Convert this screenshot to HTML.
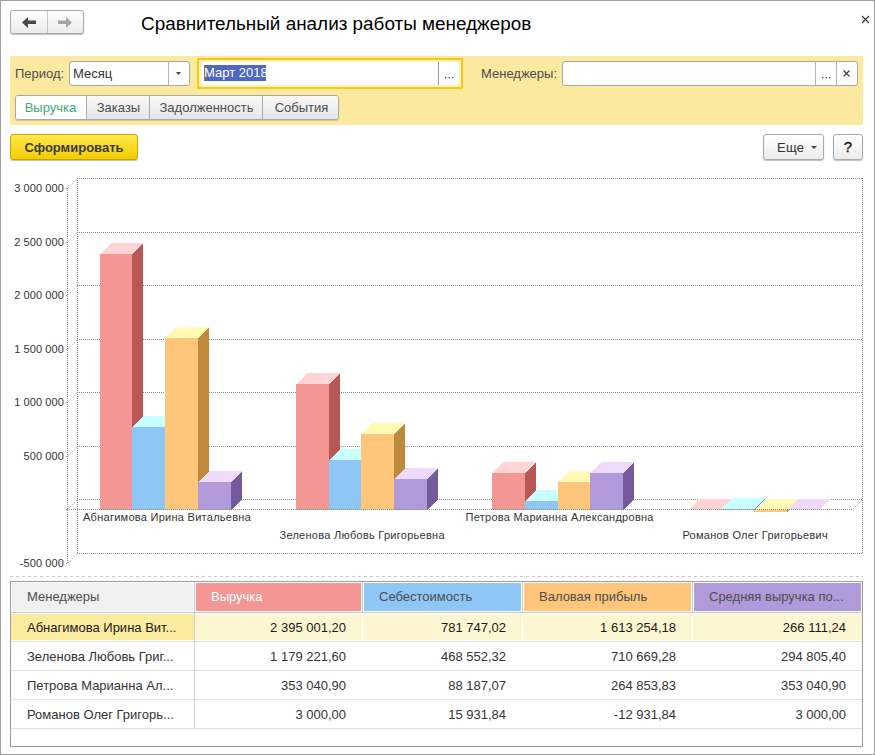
<!DOCTYPE html>
<html><head><meta charset="utf-8"><style>
*{margin:0;padding:0;box-sizing:border-box}
html,body{width:875px;height:755px;overflow:hidden;background:#fff;font-family:"Liberation Sans", sans-serif;}
#win{position:absolute;left:0;top:0;width:875px;height:755px;border:1px solid #a0a0a0;}
.abs{position:absolute}
.navgrp{position:absolute;left:10px;top:10px;width:74px;height:24px;border:1px solid #a8a8a8;border-radius:3px;background:linear-gradient(#ffffff,#ececec);box-shadow:0 1px 1px rgba(0,0,0,.25);}
.navsep{position:absolute;left:36px;top:0;width:1px;height:22px;background:#c8c8c8}
.title{position:absolute;left:141px;top:13px;font-size:18.9px;color:#000;white-space:nowrap}
.close{position:absolute;left:860px;top:14px}
.panel{position:absolute;left:10px;top:56px;width:853px;height:69px;background:#fbe9a0}
.lbl{position:absolute;font-size:13px;color:#4d4d4d;white-space:nowrap}
.inp{position:absolute;background:#fff;border:1px solid #a9a9a9;border-radius:3px}
.tabs{position:absolute;left:15px;top:95px;width:324px;height:25px;border:1px solid #a9a9a9;border-radius:3px;overflow:hidden;box-shadow:0 1px 1px rgba(0,0,0,.15)}
.tab{position:absolute;top:0;height:23px;font-size:13px;color:#4d4d4d;background:linear-gradient(#f8f8f8,#e6e6e6);border-left:1px solid #a9a9a9;line-height:24px;text-align:center}
.btn{position:absolute;border:1px solid #a8a8a8;border-radius:3px;background:linear-gradient(#ffffff,#ececec);box-shadow:0 1px 1px rgba(0,0,0,.25);font-size:13px;color:#333}
.chart{position:absolute;left:0;top:0}
.yl{position:absolute;right:811px;letter-spacing:0.1px;font-size:11px;color:#333;white-space:nowrap;line-height:13px}
.cl{position:absolute;font-size:11px;color:#333;white-space:nowrap;line-height:13px;letter-spacing:0.27px}
.dash{position:absolute;left:10px;top:576px;width:853px;height:1px;background:repeating-linear-gradient(90deg,#c8c8c8 0 3px,transparent 3px 6px)}
.tbl{position:absolute;left:10px;top:581px;width:853px;height:166px;border:1px solid #9b9b9b}
.th{position:absolute;top:583px;height:28px;font-size:13px;line-height:28px;padding-left:15px;white-space:nowrap}
.rowbg{position:absolute;height:26px}
.rsep{position:absolute;left:11px;width:851px;height:1px;background:#e0e0e0}
.hsep{position:absolute;left:11px;top:612px;width:851px;height:1px;background:#c8c8c8}
.vsep{position:absolute;top:582px;width:1px;height:147px;background:#cfcfcf}
.td{position:absolute;height:28px;font-size:13px;line-height:28px;white-space:nowrap}
.num{text-align:right}
</style></head><body>
<div id="win"></div>
<div class="navgrp"><div class="navsep"></div>
<svg class="abs" style="left:0;top:0" width="74" height="24" viewBox="0 0 74 24"><path d="M11 11.5 L17 6 L17 9.5 L25 9.5 L25 13 L17 13 L17 17 Z" fill="#4a4a4a"/><path d="M61 11.5 L55 6 L55 9.5 L47 9.5 L47 13 L55 13 L55 17 Z" fill="#a6a6a6"/></svg>
</div>
<div class="title">Сравнительный анализ работы менеджеров</div>
<svg class="close" width="11" height="11" viewBox="0 0 11 11"><path d="M2 2 L9 9 M9 2 L2 9" stroke="#333" stroke-width="1.1"/></svg>
<div class="panel"></div>
<div class="lbl" style="left:15px;top:66px">Период:</div>
<div class="inp" style="left:69px;top:61px;width:121px;height:25px">
  <div class="lbl" style="left:3px;top:4px;color:#333">Месяц</div>
  <div class="abs" style="left:98px;top:0;width:1px;height:23px;background:#b5b5b5"></div>
  <svg class="abs" style="left:106px;top:10px" width="6" height="4"><path d="M0 0 H5 L2.5 3 Z" fill="#444"/></svg>
</div>
<div class="abs" style="left:197px;top:58px;width:266px;height:31px;border:2px solid #f7c818;background:#fdf0b8"></div>
<div class="abs" style="left:201px;top:62px;width:258px;height:23px;background:#fff;border-radius:3px"></div>
<div class="abs" style="left:438px;top:62px;width:1px;height:23px;background:#9a9a9a"></div>
<svg class="abs" style="left:445px;top:77px" width="10" height="3"><rect x="0" y="0" width="1.3" height="1.3" fill="#444"/><rect x="3.5" y="0" width="1.3" height="1.3" fill="#444"/><rect x="7" y="0" width="1.3" height="1.3" fill="#444"/></svg>
<div class="abs" style="left:204px;top:65px;width:62px;height:16px;background:#4e67c3"></div>
<div class="lbl" style="left:204px;top:65px;color:#fff">Март 2018</div>
<div class="abs" style="left:204px;top:65px;width:1px;height:16px;background:#a07820"></div>
<div class="lbl" style="left:481px;top:66px">Менеджеры:</div>
<div class="inp" style="left:562px;top:61px;width:296px;height:25px">
  <div class="abs" style="left:252px;top:0;width:1px;height:23px;background:#b5b5b5"></div>
  <svg class="abs" style="left:259px;top:15px" width="10" height="3"><rect x="0" y="0" width="1.3" height="1.3" fill="#444"/><rect x="3.5" y="0" width="1.3" height="1.3" fill="#444"/><rect x="7" y="0" width="1.3" height="1.3" fill="#444"/></svg>
  <div class="abs" style="left:273px;top:0;width:1px;height:23px;background:#b5b5b5"></div>
  <svg class="abs" style="left:280px;top:8px" width="8" height="8" viewBox="0 0 8 8"><path d="M0.5 0.5 L6.5 6.5 M6.5 0.5 L0.5 6.5" stroke="#3a3a3a" stroke-width="1.1"/></svg>
</div>
<div class="tabs">
  <div class="tab" style="left:-1px;width:71px;background:#fff;color:#3daa78;border-left:none">Выручка</div>
  <div class="tab" style="left:70px;width:64px">Заказы</div>
  <div class="tab" style="left:133px;width:114px">Задолженность</div>
  <div class="tab" style="left:246px;width:78px">События</div>
</div>
<div class="btn" style="left:10px;top:134px;width:128px;height:26px;border-color:#c4a400;background:linear-gradient(#ffe84a,#f2cd00);font-weight:bold;line-height:25px;text-align:center;color:#3a3a3a">Сформировать</div>
<div class="btn" style="left:763px;top:134px;width:61px;height:26px;line-height:25px;padding-left:13px;letter-spacing:0.3px">Еще<svg class="abs" style="left:47px;top:11px" width="6" height="4"><path d="M0 0 H6 L3 3 Z" fill="#444"/></svg></div>
<div class="btn" style="left:833px;top:134px;width:30px;height:26px;line-height:24px;text-align:center;font-size:15px;color:#111;-webkit-text-stroke:0.3px #111">?</div>
<svg class="chart" width="875" height="755" viewBox="0 0 875 755" shape-rendering="crispEdges"><line x1="77" y1="178.5" x2="863" y2="178.5" stroke="#8c8c8c" stroke-dasharray="1 1" /><line x1="67.5" y1="188.5" x2="77.5" y2="178.5" stroke="#c4c4c4" stroke-dasharray="2 1" shape-rendering="auto" /><line x1="77" y1="232.5" x2="863" y2="232.5" stroke="#8c8c8c" stroke-dasharray="1 1" /><line x1="67.5" y1="242.5" x2="77.5" y2="232.5" stroke="#c4c4c4" stroke-dasharray="2 1" shape-rendering="auto" /><line x1="77" y1="285.5" x2="863" y2="285.5" stroke="#8c8c8c" stroke-dasharray="1 1" /><line x1="67.5" y1="295.5" x2="77.5" y2="285.5" stroke="#c4c4c4" stroke-dasharray="2 1" shape-rendering="auto" /><line x1="77" y1="339.5" x2="863" y2="339.5" stroke="#8c8c8c" stroke-dasharray="1 1" /><line x1="67.5" y1="349.5" x2="77.5" y2="339.5" stroke="#c4c4c4" stroke-dasharray="2 1" shape-rendering="auto" /><line x1="77" y1="392.5" x2="863" y2="392.5" stroke="#8c8c8c" stroke-dasharray="1 1" /><line x1="67.5" y1="402.5" x2="77.5" y2="392.5" stroke="#c4c4c4" stroke-dasharray="2 1" shape-rendering="auto" /><line x1="77" y1="446.5" x2="863" y2="446.5" stroke="#8c8c8c" stroke-dasharray="1 1" /><line x1="67.5" y1="456.5" x2="77.5" y2="446.5" stroke="#c4c4c4" stroke-dasharray="2 1" shape-rendering="auto" /><line x1="77" y1="499.5" x2="863" y2="499.5" stroke="#8c8c8c" stroke-dasharray="1 1" /><line x1="67.5" y1="509.5" x2="77.5" y2="499.5" stroke="#c4c4c4" stroke-dasharray="2 1" shape-rendering="auto" /><line x1="77" y1="553.5" x2="863" y2="553.5" stroke="#8c8c8c" stroke-dasharray="1 1" /><line x1="67.5" y1="563.5" x2="77.5" y2="553.5" stroke="#c4c4c4" stroke-dasharray="2 1" shape-rendering="auto" /><line x1="77.5" y1="178" x2="77.5" y2="554" stroke="#8c8c8c" stroke-dasharray="1 1" /><line x1="862.5" y1="178" x2="862.5" y2="554" stroke="#8c8c8c" stroke-dasharray="1 1" /><line x1="67.5" y1="188" x2="67.5" y2="564" stroke="#8c8c8c" stroke-dasharray="1 1" /><line x1="852.5" y1="509.5" x2="862.5" y2="499.5" stroke="#c4c4c4" stroke-dasharray="2 1" shape-rendering="auto" /><rect x="100" y="254" width="32" height="256" fill="#f49694"/><polygon points="100,254 132,254 143,243 111,243" fill="#ffd4d4"/><polygon points="132,254 143,243 143,499 132,510" fill="#b75856"/><rect x="132" y="427" width="33" height="83" fill="#8ec6f6"/><polygon points="132,427 165,427 176,416 143,416" fill="#c8ffff"/><polygon points="165,427 176,416 176,499 165,510" fill="#5a8dbf"/><rect x="165" y="338" width="33" height="172" fill="#fdc67b"/><polygon points="165,338 198,338 209,327 176,327" fill="#fffbb4"/><polygon points="198,338 209,327 209,499 198,510" fill="#bf893d"/><rect x="198" y="482" width="33" height="28" fill="#b19ad9"/><polygon points="198,482 231,482 242,471 209,471" fill="#f0dafc"/><polygon points="231,482 242,471 242,499 231,510" fill="#735a9d"/><rect x="296" y="384" width="33" height="126" fill="#f49694"/><polygon points="296,384 329,384 340,373 307,373" fill="#ffd4d4"/><polygon points="329,384 340,373 340,499 329,510" fill="#b75856"/><rect x="329" y="460" width="32" height="50" fill="#8ec6f6"/><polygon points="329,460 361,460 372,449 340,449" fill="#c8ffff"/><polygon points="361,460 372,449 372,499 361,510" fill="#5a8dbf"/><rect x="361" y="434" width="33" height="76" fill="#fdc67b"/><polygon points="361,434 394,434 405,423 372,423" fill="#fffbb4"/><polygon points="394,434 405,423 405,499 394,510" fill="#bf893d"/><rect x="394" y="479" width="33" height="31" fill="#b19ad9"/><polygon points="394,479 427,479 438,468 405,468" fill="#f0dafc"/><polygon points="427,479 438,468 438,499 427,510" fill="#735a9d"/><rect x="492" y="473" width="33" height="37" fill="#f49694"/><polygon points="492,473 525,473 536,462 503,462" fill="#ffd4d4"/><polygon points="525,473 536,462 536,499 525,510" fill="#b75856"/><rect x="525" y="501" width="33" height="9" fill="#8ec6f6"/><polygon points="525,501 558,501 569,490 536,490" fill="#c8ffff"/><polygon points="558,501 569,490 569,499 558,510" fill="#5a8dbf"/><rect x="558" y="482" width="32" height="28" fill="#fdc67b"/><polygon points="558,482 590,482 601,471 569,471" fill="#fffbb4"/><polygon points="590,482 601,471 601,499 590,510" fill="#bf893d"/><rect x="590" y="473" width="33" height="37" fill="#b19ad9"/><polygon points="590,473 623,473 634,462 601,462" fill="#f0dafc"/><polygon points="623,473 634,462 634,499 623,510" fill="#735a9d"/><rect x="688" y="510" width="33" height="0" fill="#f49694"/><polygon points="688,510 721,510 732,499 699,499" fill="#ffd4d4"/><polygon points="721,510 732,499 732,499 721,510" fill="#b75856"/><rect x="721" y="509" width="33" height="1" fill="#8ec6f6"/><polygon points="721,509 754,509 765,498 732,498" fill="#c8ffff"/><polygon points="754,509 765,498 765,499 754,510" fill="#5a8dbf"/><rect x="754" y="510" width="33" height="2" fill="#fdc67b"/><polygon points="754,510 787,510 798,499 765,499" fill="#fffbb4"/><polygon points="787,510 798,499 798,501 787,512" fill="#bf893d"/><rect x="787" y="510" width="32" height="0" fill="#b19ad9"/><polygon points="787,510 819,510 830,499 798,499" fill="#f0dafc"/><polygon points="819,510 830,499 830,499 819,510" fill="#735a9d"/><line x1="67" y1="509.5" x2="853" y2="509.5" stroke="#8c8c8c" stroke-dasharray="1 1" /><line x1="66" y1="188.5" x2="67" y2="188.5" stroke="#8c8c8c" /><line x1="66" y1="242.5" x2="67" y2="242.5" stroke="#8c8c8c" /><line x1="66" y1="295.5" x2="67" y2="295.5" stroke="#8c8c8c" /><line x1="66" y1="349.5" x2="67" y2="349.5" stroke="#8c8c8c" /><line x1="66" y1="402.5" x2="67" y2="402.5" stroke="#8c8c8c" /><line x1="66" y1="456.5" x2="67" y2="456.5" stroke="#8c8c8c" /><line x1="66" y1="509.5" x2="67" y2="509.5" stroke="#8c8c8c" /><line x1="66" y1="563.5" x2="67" y2="563.5" stroke="#8c8c8c" /></svg>
<div class="yl" style="top:557px">-500 000</div><div class="yl" style="top:450px">500 000</div><div class="yl" style="top:396px">1 000 000</div><div class="yl" style="top:343px">1 500 000</div><div class="yl" style="top:289px">2 000 000</div><div class="yl" style="top:236px">2 500 000</div><div class="yl" style="top:182px">3 000 000</div>
<div class="cl" style="left:83px;top:511px">Абнагимова Ирина Витальевна</div><div class="cl" style="left:279.5px;top:529px">Зеленова Любовь Григорьевна</div><div class="cl" style="left:465.5px;top:511px">Петрова Марианна Александровна</div><div class="cl" style="left:682.5px;top:529px">Романов Олег Григорьевич</div>
<div class="dash"></div>
<div class="tbl"></div>
<div class="th" style="left:12px;width:181px;background:#f0f0f0;color:#4d4d4d">Менеджеры</div><div class="th" style="left:196px;width:165px;background:#f49694;color:#ffffff">Выручка</div><div class="th" style="left:364px;width:157px;background:#8ec6f6;color:#4d4d4d">Себестоимость</div><div class="th" style="left:524px;width:167px;background:#fdc67b;color:#4d4d4d">Валовая прибыль</div><div class="th" style="left:694px;width:167px;background:#b19ad9;color:#4d4d4d">Средняя выручка по...</div><div class="rowbg" style="top:614px;left:11px;width:183px;background:#fbeb9f"></div><div class="rowbg" style="top:614px;left:195px;width:167px;background:#fdf6d2"></div><div class="rowbg" style="top:614px;left:363px;width:159px;background:#fdf6d2"></div><div class="rowbg" style="top:614px;left:523px;width:169px;background:#fdf6d2"></div><div class="rowbg" style="top:614px;left:693px;width:169px;background:#fdf6d2"></div><div class="rsep" style="top:641px"></div><div class="td" style="left:27px;top:614px;color:#1a1a1a">Абнагимова Ирина Вит...</div><div class="td num" style="left:196px;width:150px;top:614px;color:#1a1a1a">2 395 001,20</div><div class="td num" style="left:364px;width:142px;top:614px;color:#1a1a1a">781 747,02</div><div class="td num" style="left:524px;width:152px;top:614px;color:#1a1a1a">1 613 254,18</div><div class="td num" style="left:694px;width:152px;top:614px;color:#1a1a1a">266 111,24</div><div class="rsep" style="top:670px"></div><div class="td" style="left:27px;top:643px;color:#333333">Зеленова Любовь Григ...</div><div class="td num" style="left:196px;width:150px;top:643px;color:#333333">1 179 221,60</div><div class="td num" style="left:364px;width:142px;top:643px;color:#333333">468 552,32</div><div class="td num" style="left:524px;width:152px;top:643px;color:#333333">710 669,28</div><div class="td num" style="left:694px;width:152px;top:643px;color:#333333">294 805,40</div><div class="rsep" style="top:699px"></div><div class="td" style="left:27px;top:672px;color:#333333">Петрова Марианна Ал...</div><div class="td num" style="left:196px;width:150px;top:672px;color:#333333">353 040,90</div><div class="td num" style="left:364px;width:142px;top:672px;color:#333333">88 187,07</div><div class="td num" style="left:524px;width:152px;top:672px;color:#333333">264 853,83</div><div class="td num" style="left:694px;width:152px;top:672px;color:#333333">353 040,90</div><div class="rsep" style="top:728px"></div><div class="td" style="left:27px;top:701px;color:#333333">Романов Олег Григорь...</div><div class="td num" style="left:196px;width:150px;top:701px;color:#333333">3 000,00</div><div class="td num" style="left:364px;width:142px;top:701px;color:#333333">15 931,84</div><div class="td num" style="left:524px;width:152px;top:701px;color:#333333">-12 931,84</div><div class="td num" style="left:694px;width:152px;top:701px;color:#333333">3 000,00</div><div class="vsep" style="left:194px"></div><div class="vsep" style="left:362px;height:30px"></div><div class="vsep" style="left:522px;height:30px"></div><div class="vsep" style="left:692px;height:30px"></div>
<div class="hsep"></div>
</body></html>
